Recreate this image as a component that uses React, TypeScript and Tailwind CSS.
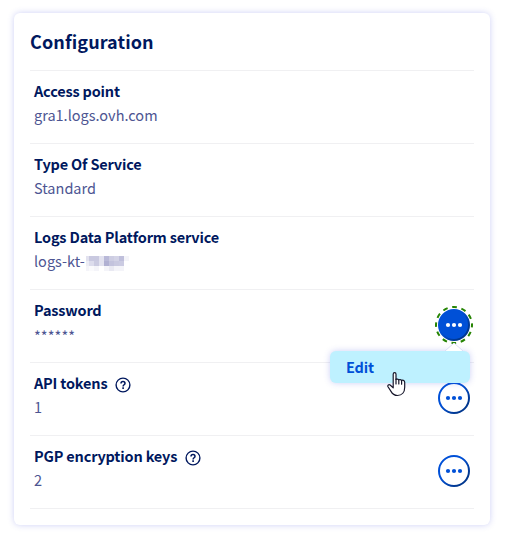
import React from "react";

const FONT = "font-['Noto_Sans_CJK_JP','Noto_Sans',sans-serif]";

function Help() {
  return (
    <svg className="mt-[6px] ml-[7.5px] h-4 w-4" viewBox="0 0 16 16" fill="none" stroke="#00185e">
      <circle cx="8" cy="8" r="6.9" strokeWidth="1.4" />
      <path d="M6 6.5C6 5.2 6.8 4.6 8 4.6s2 .7 2 1.8c0 1.3-1.9 1.5-1.9 3" strokeWidth="1.5" />
      <path d="M8.1 10.3v1.6" strokeWidth="1.6" />
    </svg>
  );
}

function Dots({ active = false }: { active?: boolean }) {
  const id = active ? "action-active" : "action-idle";
  const dot = active ? "#ffffff" : "#0050d7";
  return (
    <svg className="h-10 w-10 shrink-0" viewBox="0 0 40 40">
      <defs>
        <linearGradient id={id} x1="0" y1="0" x2="1" y2="1">
          <stop offset="0.4" stopColor="#0050d7" />
          <stop offset="0.8" stopColor="#00378f" />
        </linearGradient>
      </defs>
      {active && (
        <circle cx="20" cy="20" r="18" fill="none" stroke="#268403" strokeWidth="2" strokeDasharray="4.8 4.6248" strokeDashoffset="2.4" />
      )}
      <circle cx="20" cy="20" r="15" fill={active ? "#0050d7" : "#ffffff"} stroke={`url(#${id})`} strokeWidth="2" />
      <circle cx="14" cy="20" r="2.1" fill={dot} />
      <circle cx="20" cy="20" r="2.1" fill={dot} />
      <circle cx="26" cy="20" r="2.1" fill={dot} />
    </svg>
  );
}

const MOSAIC = [
  ["#e2e2ef", "#c9c9e0", "#c9c9e0", "#e2e2ef", "#b9b9d8", "#cdcde2", "#d3d3e6", "#bfbfdb", "#f4f4f9"],
  ["#ededf5", "#dcdcec", "#cbcbe1", "#e2e2ef", "#b0b0d2", "#c3c3dd", "#c9c9e0", "#cbcbe2", "#ffffff"],
  ["#f4f4f9", "#fafafc", "#f4f4f9", "#ffffff", "#f4f4f9", "#e9e9f2", "#f4f4f9", "#f4f4f9", "#ffffff"],
];

function Mosaic() {
  return (
    <span className="mt-[7px] ml-[1px] grid h-[15px] w-[43px] grid-cols-[3px_repeat(8,5px)] grid-rows-3">
      {MOSAIC.flat().map((c, i) => (
        <span key={i} style={{ backgroundColor: c }} />
      ))}
    </span>
  );
}

interface RowProps {
  title: string;
  value: string;
  valueClass?: string;
  help?: boolean;
  masked?: boolean;
  action?: React.ReactNode;
}

function Row({ title, value, valueClass = "", help, masked, action }: RowProps) {
  return (
    <div className="flex h-[73px] items-start justify-between border-b border-[#f0f0f2] pl-1">
      <div className="pt-2">
        <div className="flex h-6 items-start">
          <span className="text-[14.5px] leading-6 font-bold tracking-[-0.18px] whitespace-nowrap text-[#00185e]">{title}</span>
          {help && <Help />}
        </div>
        <div className="flex h-6 items-start">
          <span className={`text-[14.5px] leading-6 whitespace-nowrap text-[#4d5592] ${valueClass}`}>{value}</span>
          {masked && <Mosaic />}
        </div>
      </div>
      {action && <div className="relative pt-[15px]">{action}</div>}
    </div>
  );
}

function Menu() {
  return (
    <div className="absolute top-[53px] right-1 z-10 w-[140px]">
      <svg className="mr-[7px] ml-auto block h-[8px] w-[18px]" viewBox="0 0 18 8">
        <path d="M0 8 9 0l9 8" fill="#fff" stroke="#dcdef6" />
      </svg>
      <div className="h-8 rounded-[6px] bg-[#bef1ff] pl-4 text-[14.5px] leading-8 font-bold tracking-[-0.18px] text-[#0050d7] shadow-[0_0_6px_rgba(60,70,220,0.25)]">
        Edit
      </div>
      <svg className="absolute top-[29px] left-[57px] h-[25px] w-[19px]" viewBox="0 0 19 25">
        <path
          d="M6.2 2.2c0-1 .6-1.5 1.4-1.5S9 1.2 9 2.2v5.3c.3-.7 2.6-.6 2.8.5.5-.8 2.5-.6 2.8.6.7-.7 3.1-.4 3.1 1.6v5c0 5-2.6 8.3-7.3 8.3-3.5 0-4.9-1.4-6.4-4.1L1 14.700c-.7-1.3.9-2.7 2.1-1.7l3.1 2.8Z"
          fill="#fff"
          stroke="#17172b"
          strokeWidth="1.2"
          strokeLinejoin="round"
        />
        <path d="M9 7v5M11.8 8v4M14.6 8.6v3.6" stroke="#17172b" strokeWidth="1.2" strokeLinecap="round" />
      </svg>
    </div>
  );
}

export default function App() {
  return (
    <main className={`h-[537px] w-[505px] overflow-hidden bg-white pt-[13px] pl-[14px] ${FONT}`}>
      <section className="h-[512px] w-[476px] rounded-[6px] bg-white px-4 shadow-[0_0_6px_rgba(60,70,220,0.25)]">
        <h2 className="h-[58px] border-b border-[#f0f0f2] pt-[14px] text-[18px] leading-[28px] font-bold tracking-[0.1px] text-[#00185e]">
          Configuration
        </h2>
        <Row title="Access point" value="gra1.logs.ovh.com" />
        <Row title="Type Of Service" value="Standard" />
        <Row title="Logs Data Platform service" value="logs-kt-" masked />
        <Row
          title="Password"
          value="******"
          valueClass="pt-[2px] tracking-[0.1px]"
          action={
            <>
              <Dots active />
              <Menu />
            </>
          }
        />
        <Row title="API tokens" value="1" help action={<Dots />} />
        <Row title="PGP encryption keys" value="2" help action={<Dots />} />
      </section>
    </main>
  );
}
